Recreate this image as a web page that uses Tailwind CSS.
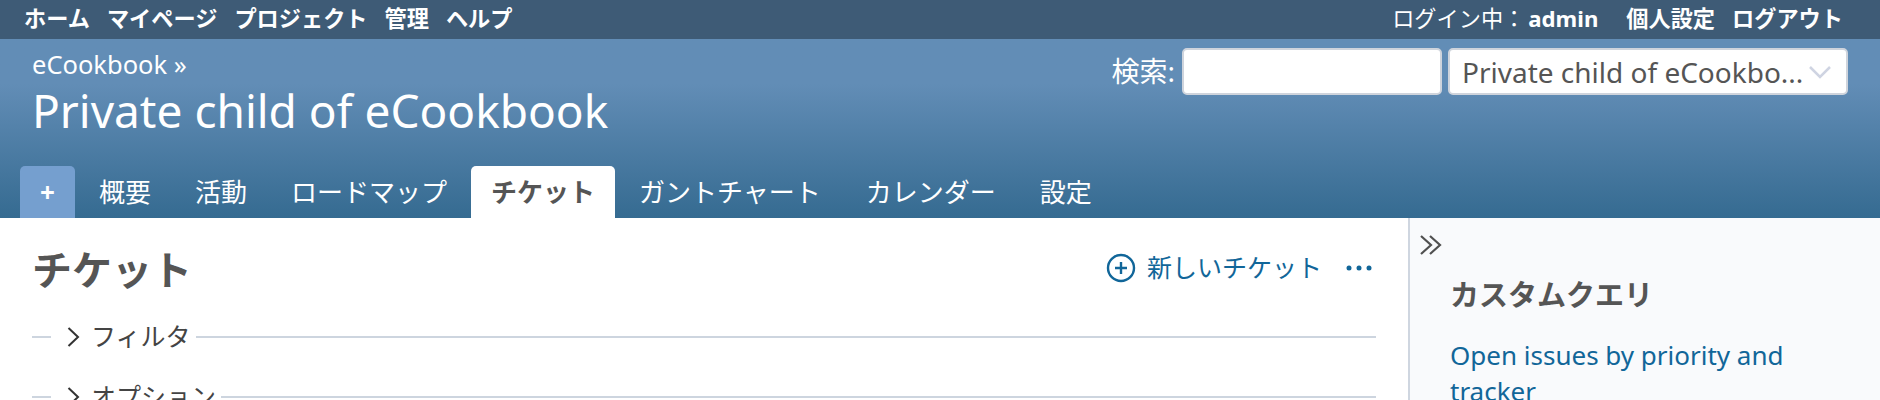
<!DOCTYPE html>
<html lang="ja">
<head>
<meta charset="utf-8">
<script src="https://cdn.jsdelivr.net/npm/@tailwindcss/browser@4"></script>
</head>
<body class="h-[400px] overflow-hidden bg-white font-['Noto_Sans','Noto_Sans_CJK_JP',sans-serif] text-[#555]">
<div class="flex h-[39px] items-center justify-between bg-[#3e5b76] pb-[1px] pl-[24px] pr-[37px] text-[22.2px] font-bold leading-none text-white">
  <nav class="flex gap-[17px]"><a>ホーム</a><a>マイページ</a><a>プロジェクト</a><a>管理</a><a>ヘルプ</a></nav>
  <div class="flex items-center"><span class="font-normal">ログイン中：</span><a class="ml-[3px]">admin</a><a class="ml-[28px]">個人設定</a><a class="ml-[17px]">ログアウト</a></div>
</div>
<header class="flex h-[179px] flex-col bg-gradient-to-b from-[#628db6] from-[25%] to-[#356b91] text-white">
  <div class="flex flex-1 justify-between pl-[32px] pr-[32px]">
    <div class="pt-[10px]">
      <div class="text-[25.5px] leading-[30px]">eCookbook »</div>
      <h1 class="text-[46px] leading-[62px]">Private child of eCookbook</h1>
    </div>
    <div class="flex items-start gap-[6px] pt-[9px]">
      <label class="mr-[1px] text-[28px] leading-[47px]">検索:</label>
      <div class="h-[47px] w-[260px] rounded-[5px] border-2 border-[#cfd4dc] bg-white"></div>
      <div class="flex h-[47px] w-[400px] items-center gap-[4px] rounded-[5px] border-2 border-[#cfd4dc] bg-white pl-[12px] pr-[14px] text-[28px] leading-none text-[#555]">
        <span class="min-w-0 flex-1 whitespace-nowrap">Private child of eCookbo...</span>
        <svg class="h-[14px] w-[24px] shrink-0" viewBox="0 0 24 14" fill="none" stroke="#cfd4e2" stroke-width="2.5"><path d="M2 2l10 10L22 2"/></svg>
      </div>
    </div>
  </div>
  <nav class="flex h-[52px] items-stretch pl-[20px] text-[26px] leading-none">
    <a class="flex w-[55px] items-center justify-center rounded-t-[5px] bg-[#759fcf] font-bold">+</a>
    <a class="ml-[24px] flex items-center">概要</a>
    <a class="ml-[44px] flex items-center">活動</a>
    <a class="ml-[44px] flex items-center">ロードマップ</a>
    <a class="ml-[24px] flex items-center rounded-t-[5px] bg-white px-[20px] font-bold text-[#555]">チケット</a>
    <a class="ml-[24px] flex items-center">ガントチャート</a>
    <a class="ml-[45px] flex items-center">カレンダー</a>
    <a class="ml-[44px] flex items-center">設定</a>
  </nav>
</header>
<main class="flex h-[182px] overflow-hidden">
  <section class="w-[1408px] shrink-0 pl-[32px] pr-[32px]">
    <div class="flex h-[80px] items-center justify-between pt-[24px]">
      <h2 class="text-[40px] font-bold leading-none">チケット</h2>
      <div class="mb-[4px] flex items-center pr-[4px] text-[25px] text-[#169]">
        <svg class="mr-[11px] h-[30px] w-[30px]" viewBox="0 0 30 30" fill="none" stroke="#169" stroke-width="2.4"><circle cx="15" cy="15" r="13"/><path d="M15 9v12M9 15h12"/></svg>
        <a>新しいチケット</a>
        <svg class="ml-[24px] h-[6px] w-[26px]" viewBox="0 0 26 6" fill="#169"><circle cx="3" cy="3" r="2.5"/><circle cx="13" cy="3" r="2.5"/><circle cx="23" cy="3" r="2.5"/></svg>
      </div>
    </div>
    <div class="mt-[9px] flex h-[60px] items-center text-[25px] text-[#444]">
      <i class="h-[2px] w-[19px] bg-[#cdd5df]"></i>
      <svg class="ml-[16px] mr-[11px] h-[22px] w-[13px]" viewBox="0 0 13 22" fill="none" stroke="#333" stroke-width="2"><path d="M1.5 2l9.5 9-9.5 9"/></svg>
      <span>フィルタ</span><i class="ml-[5px] h-[2px] flex-1 bg-[#cdd5df]"></i>
    </div>
    <div class="flex h-[60px] items-center text-[25px] text-[#444]">
      <i class="h-[2px] w-[19px] bg-[#cdd5df]"></i>
      <svg class="ml-[16px] mr-[11px] h-[22px] w-[13px]" viewBox="0 0 13 22" fill="none" stroke="#333" stroke-width="2"><path d="M1.5 2l9.5 9-9.5 9"/></svg>
      <span>オプション</span><i class="ml-[5px] h-[2px] flex-1 bg-[#cdd5df]"></i>
    </div>
  </section>
  <aside class="flex-1 border-l-2 border-[#cfd6e0] bg-[#f9fafc] pl-[40px]">
    <svg class="-ml-[30px] mt-[16px] h-[22px] w-[24px]" viewBox="0 0 24 22" fill="none" stroke="#505050" stroke-width="2.2"><path d="M1 2l10 9-10 9M10 2l10 9-10 9"/></svg>
    <h3 class="mt-[21px] text-[29px] font-bold leading-[36px]">カスタムクエリ</h3>
    <p class="mt-[24px] w-[340px] text-[26px] leading-[36px] text-[#169]">Open issues by priority and tracker</p>
  </aside>
</main>
</body>
</html>
